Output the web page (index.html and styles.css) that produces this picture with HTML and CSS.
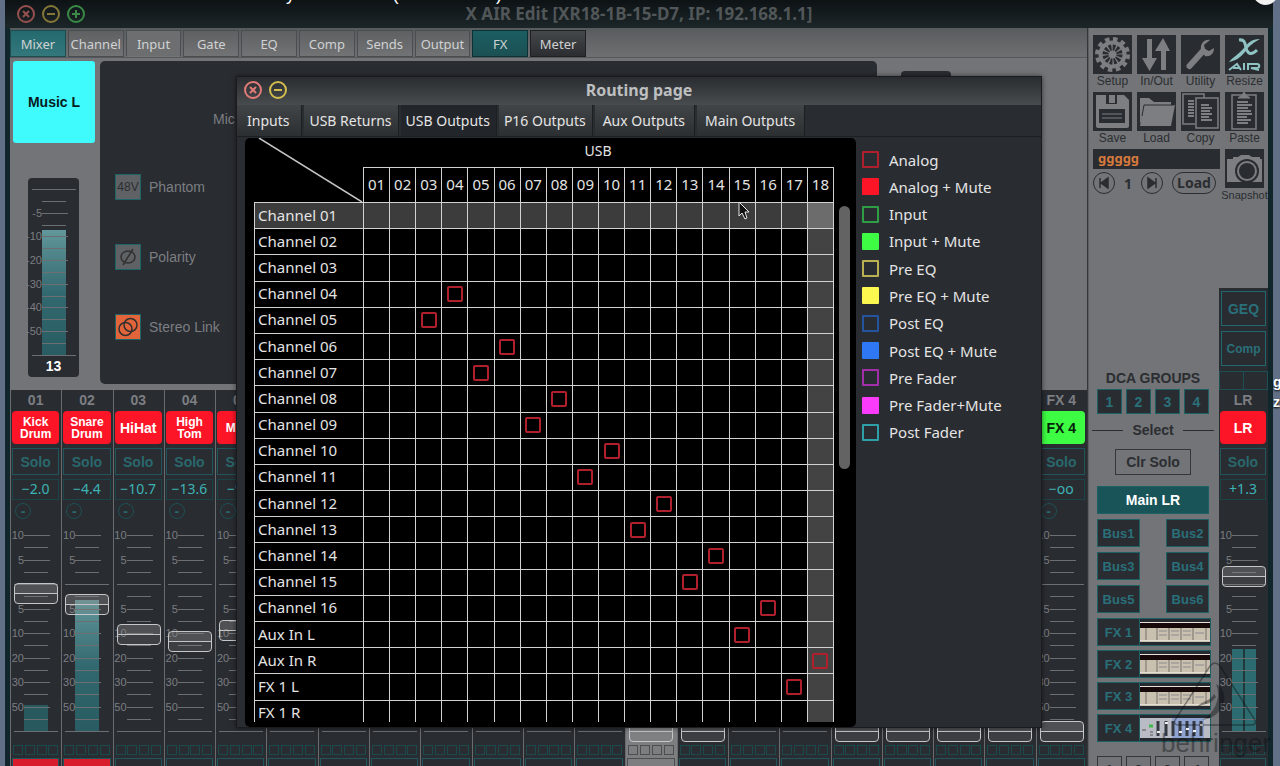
FILE: index.html
```
<!DOCTYPE html>
<html lang="en">
<head>
  <meta charset="utf-8">
  <title>X AIR Edit</title>
  <link rel="stylesheet" href="styles.css">
</head>
<body>
  <div class="caption"><span>y</span><span>(</span><span>)</span></div>
  <div class="knob"></div>
  <div class="desktop-label">g<br>z</div>

  <div class="app">
    <header class="titlebar">
      <div class="dots">
        <button class="dot red" aria-label="Close"><svg viewBox="0 0 18 18"><circle cx="9" cy="9" r="8"/><path d="M6 6l6 6M12 6l-6 6"/></svg></button>
        <button class="dot yellow" aria-label="Minimize"><svg viewBox="0 0 18 18"><circle cx="9" cy="9" r="8"/><path d="M5 9h8"/></svg></button>
        <button class="dot green" aria-label="Zoom"><svg viewBox="0 0 18 18"><circle cx="9" cy="9" r="8"/><path d="M5 9h8M9 5v8"/></svg></button>
      </div>
      <h1>X AIR Edit [XR18-1B-15-D7, IP: 192.168.1.1]</h1>
    </header>

    <div class="body">
      <main class="main">
        <nav class="tabs">
          <div class="tab-list">
            <button class="teal">Mixer</button>
            <button>Channel</button>
            <button class="open">Input</button>
            <button>Gate</button>
            <button>EQ</button>
            <button>Comp</button>
            <button>Sends</button>
            <button>Output</button>
            <button class="fx">FX</button>
            <button class="dark">Meter</button>
          </div>
        </nav>

        <section class="input-page">
          <div class="source">
            <button class="channel-name">Music L</button>
            <div class="input-meter">
              <div class="scale" id="input-scale"></div>
              <b>13</b>
            </div>
          </div>
          <div class="input-panel">
            <span class="mic">Mic</span>
            <div class="option"><button id="phantom">48V</button><label for="phantom">Phantom</label></div>
            <div class="option"><button id="polarity"><svg viewBox="0 0 24 24"><ellipse cx="12" cy="12" rx="7" ry="6"/><path d="M17 4L7 20"/></svg></button><label for="polarity">Polarity</label></div>
            <div class="option on"><button id="link"><svg viewBox="0 0 24 24"><circle cx="9.500" cy="14" r="6.500"/><circle cx="14.500" cy="10" r="6.500"/></svg></button><label for="link">Stereo Link</label></div>
          </div>
          <div class="side-panel"></div>
        </section>

        <section class="strips" id="strips"></section>
      </main>

      <aside class="sidebar">
        <div class="tools">
          <button class="tool"><svg viewBox="0 0 39 39"><circle cx="19.500" cy="19.500" r="15.500" fill="none" stroke="#7c7e82" stroke-width="4" stroke-dasharray="4.500 3.620"/><circle cx="19.500" cy="19.500" r="14" fill="#7c7e82"/><circle cx="19.500" cy="19.500" r="7" fill="none" stroke="#292c30" stroke-width="6" stroke-dasharray="2.400 1.265"/><circle cx="19.500" cy="19.500" r="2.500" fill="#7c7e82"/></svg>Setup</button>
          <button class="tool"><svg viewBox="0 0 39 39"><path fill="#7c7e82" d="M10 4h5v19h5l-7.500 13L5 23h5zM24 35V16h-6l8-13 7 13h-4v19z"/></svg>In/Out</button>
          <button class="tool"><svg viewBox="0 0 39 39"><path d="M8.500 31L22 16" stroke="#7c7e82" stroke-width="6" stroke-linecap="round"/><path fill="#7c7e82" d="M29 5c-6-1-10 4-9 10l4 6c5 1 9-2 9-8l-5 3-4-2-1-4z"/></svg>Utility</button>
          <button class="tool"><svg viewBox="0 0 39 39" fill="none" stroke="#8fc2c2"><path fill="#8fc2c2" stroke="none" d="M35 4c-9 0-12 4-16 9-5 6-11 9-15 14 6-1 11-4 16-10 5-7 8-9 15-13z"/><path d="M14 5c6-1 6 4 7 8s4 9 11 2" stroke-width="3"/><path d="M4 35l8-6 4 6M8 33h7M19 28v7M23 35v-6h9c3 0 3 4 0 4h-6l8 2" stroke-width="2"/></svg>Resize</button>
          <button class="tool"><svg viewBox="0 0 39 39"><path fill="#7c7e82" d="M3 3h28l5 5v26q0 2-2 2H5q-2 0-2-2z"/><path fill="#292c30" d="M13 3h11v9H13zM6 17h26v14H6z"/><path fill="#7c7e82" d="M16 3h6v8h-6z"/><path d="M9 22h20M9 26h20" stroke="#7c7e82"/></svg>Save</button>
          <button class="tool"><svg viewBox="0 0 39 39"><path fill="#7c7e82" d="M3 6h9l5 4h17v4H7L4 31l-1-1z"/><path fill="#7c7e82" d="M7 13h31l-4 21H3z"/><path d="M5 24l2-11h30" stroke="#292c30" fill="none"/></svg>Load</button>
          <button class="tool"><svg viewBox="0 0 39 39" fill="none" stroke="#7c7e82"><path d="M14 32H2V2h21v4M15 6h22v30H15z" stroke-width="1.500"/><path d="M7 9h6M7 12h6M7 15h6M7 18h6M7 21h6M7 24h6M20 13h8M20 16h11M20 19h9M20 22h11M20 25h8M20 28h11" stroke-width="2"/></svg>Copy</button>
          <button class="tool"><svg viewBox="0 0 39 39" fill="none" stroke="#7c7e82"><path d="M7 3h24v34H7z" stroke-width="1.500"/><path fill="#7c7e82" d="M13 6h12l-4-3-2-3-2 3z"/><path d="M12 10h11M12 13h15M12 16h11M12 19h14M12 22h15M12 25h10M12 28h14M12 31h11" stroke-width="2"/></svg>Paste</button>
          <div class="snap">
            <input type="text" value="ggggg" aria-label="Snapshot name">
            <div class="snap-nav">
              <button class="round" aria-label="Previous"><svg viewBox="0 0 20 20"><path d="M6 5v10M14 5v10l-7-5z"/></svg></button>
              <span>1</span>
              <button class="round" aria-label="Next"><svg viewBox="0 0 20 20"><path d="M14 5v10M6 5v10l7-5z"/></svg></button>
              <button class="load">Load</button>
            </div>
          </div>
          <button class="tool snapshot"><svg viewBox="0 0 39 39"><path fill="#7c7e82" d="M2 10h6V8h5l3-2h8l3 2h8v2h2v23H2z"/><circle cx="22" cy="22" r="12" fill="#292c30"/><circle cx="22" cy="22" r="10" fill="#7c7e82"/><circle cx="22" cy="22" r="8" fill="#292c30"/></svg>Snapshot</button>
        </div>

        <div class="lower">
          <div class="groups">
            <h2>DCA GROUPS</h2>
            <div class="dca"><button>1</button><button>2</button><button>3</button><button>4</button></div>
            <div class="select">Select</div>
            <button class="clr">Clr Solo</button>
            <div class="sends">
              <button class="main-lr">Main LR</button>
              <button>Bus1</button><button>Bus2</button>
              <button>Bus3</button><button>Bus4</button>
              <button>Bus5</button><button>Bus6</button>
            </div>
            <div class="fx-list" id="fx-list"></div>
            <div class="dca mutes"><button>1</button><button>2</button><button>3</button><button>4</button></div>
          </div>
          <div class="lr" id="lr">
            <button class="insert">GEQ</button>
            <button class="insert comp">Comp</button>
            <div class="pan"></div>
          </div>
        </div>
      </aside>
    </div>
  </div>

  <div class="dialog" role="dialog" aria-labelledby="routing-title">
    <header class="dialog-title">
      <div class="dots">
        <button class="dot red" aria-label="Close"><svg viewBox="0 0 18 18"><circle cx="9" cy="9" r="8"/><path d="M6 6l6 6M12 6l-6 6"/></svg></button>
        <button class="dot yellow" aria-label="Minimize"><svg viewBox="0 0 18 18"><circle cx="9" cy="9" r="8"/><path d="M5 9h8"/></svg></button>
      </div>
      <h2 id="routing-title">Routing page</h2>
    </header>
    <nav class="dialog-tabs">
      <button>Inputs</button>
      <button>USB Returns</button>
      <button class="active">USB Outputs</button>
      <button>P16 Outputs</button>
      <button class="roomy">Aux Outputs</button>
      <button class="roomy">Main Outputs</button>
    </nav>
    <div class="dialog-body">
      <div class="matrix">
        <div class="matrix-title">USB</div>
        <svg class="diagonal" viewBox="0 0 109 64"><path d="M5 0L108 64"/></svg>
        <div class="matrix-view">
          <table id="routing"></table>
          <div class="scrollbar"></div>
        </div>
        <svg class="cursor" viewBox="0 0 12 19"><path d="M1 1v14l3-3 3 6 2-1-2-6h4z"/></svg>
      </div>
      <ul class="legend">
        <li><i class="red"></i>Analog</li>
        <li><i class="red fill"></i>Analog + Mute</li>
        <li><i class="green"></i>Input</li>
        <li><i class="green fill"></i>Input + Mute</li>
        <li><i class="yellow"></i>Pre EQ</li>
        <li><i class="yellow fill"></i>Pre EQ + Mute</li>
        <li><i class="blue"></i>Post EQ</li>
        <li><i class="blue fill"></i>Post EQ + Mute</li>
        <li><i class="pink"></i>Pre Fader</li>
        <li><i class="pink fill"></i>Pre Fader+Mute</li>
        <li><i class="cyan"></i>Post Fader</li>
      </ul>
    </div>
  </div>

  <div class="watermark">
    <svg viewBox="0 0 90 66"><path d="M40 4q5-6 10 0l35 54q2 5-4 5H9q-6 0-4-5z"/><path d="M46 22c16 8 8 34-14 36 12-6 20-22 14-36zM26 46c6-8 14-6 18-14l2 3c-6 8-12 6-20 11z" fill="currentColor" stroke="none"/></svg>
    <span>behringer</span>
  </div>

  <script src="script.js"></script>
</body>
</html>
```
FILE: styles.css
```
* {
  box-sizing: border-box;
}

body {
  margin: 0;
  height: 100vh;
  overflow: hidden;
  position: relative;
  background: #617087;
  font-family: "Liberation Sans", Arial, sans-serif;
  font-size: 14px;
  color: #7c7e82;
}

button {
  margin: 0;
  padding: 0;
  border: none;
  background: none;
  color: inherit;
  font: inherit;
  cursor: pointer;
}

h1,
h2 {
  margin: 0;
}

/* things lying over the window */
.caption {
  position: absolute;
  z-index: 5;
  top: -16px;
  left: 286px;
  width: 216px;
  display: flex;
  justify-content: space-between;
  color: #fff;
  font-size: 18px;
  line-height: 20px;
}

.knob {
  position: absolute;
  z-index: 5;
  top: -20px;
  right: 2px;
  width: 25px;
  height: 25px;
  border-radius: 50%;
  background: #f2f2f2;
}

.desktop-label {
  position: absolute;
  z-index: 5;
  left: calc(100% - 7px);
  top: 372px;
  color: #fff;
  font-weight: bold;
  line-height: 20px;
  text-shadow: 0 1px 2px #000;
}

.app {
  height: 100%;
  margin: 0 7px 0 5px;
  padding: 0 5px;
  display: flex;
  flex-direction: column;
  background: #10262a;
}

.titlebar {
  flex: none;
  height: 28px;
  margin: 0 -5px;
  position: relative;
  background: linear-gradient(#0d1215, #1c2628);
}

.titlebar h1 {
  font: bold 17px/28px "Noto Sans", sans-serif;
  text-align: center;
  color: #515658;
}

.dots {
  position: absolute;
  left: 12px;
  top: 5px;
  display: flex;
  gap: 7px;
}

.dot {
  width: 18px;
  height: 18px;
}

.dot svg {
  display: block;
  fill: none;
  stroke: currentColor;
  stroke-width: 2;
}

.dot.red { color: #96504e; }
.dot.yellow { color: #857738; }
.dot.green { color: #3a8a46; }

.body {
  flex: 1;
  min-height: 0;
  display: flex;
  background: #727477;
}

.main {
  flex: 1;
  min-width: 0;
  border-right: 1px solid #34373a;
}

/* main tabs */
.tabs {
  height: 30px;
  padding-top: 2px;
  background: linear-gradient(#595c5e, #6e6f70);
  border-bottom: 1px solid #55585a;
}

.tab-list {
  width: 576px;
  height: 27px;
  display: grid;
  grid-template-columns: repeat(10, 1fr);
  gap: 2px;
}

.tab-list button {
  font: 13px/24px "Noto Sans", sans-serif;
  color: #d0d2d3;
  background: linear-gradient(#5e6062, #727374);
  border: 1px solid #4b4e50;
}

.tab-list .teal { background: linear-gradient(#23696e, #34787c); border-color: #1b4c50; }
.tab-list .open { background: #6c6e6f; border-bottom-color: #727477; }
.tab-list .fx { background: linear-gradient(#1b5e62, #1c5054); border-color: #0c3033; }
.tab-list .dark { background: linear-gradient(#45484a, #2b2d30); border-color: #1e2023; }

/* input page */
.input-page {
  display: flex;
  height: 332px;
  padding: 3px 3px 6px;
}

.source {
  width: 82px;
  margin-right: 5px;
}

.channel-name {
  width: 82px;
  height: 82px;
  border-radius: 3px;
  background: #3ffbfd;
  color: #061c1e;
  font-weight: bold;
}

.input-meter {
  width: 51px;
  height: 199px;
  margin: 35px 0 0 15px;
  padding-top: 11px;
  border-radius: 4px;
  background: #292c31;
  text-align: center;
  color: #fff;
}

.input-panel {
  width: 777px;
  height: 323px;
  padding: 50px 15px;
  border-radius: 5px;
  background: #292c31;
}

.mic {
  display: block;
  height: 63px;
  margin-left: 98px;
}

.option {
  display: flex;
  align-items: center;
  gap: 8px;
  margin-bottom: 44px;
}

.option button {
  width: 26px;
  height: 26px;
  border: 1px solid #1d6467;
  background: #5f6264;
  color: #2b2e32;
  font-size: 12px;
}

.option.on button {
  background: #e2643a;
}

.option svg {
  display: block;
  fill: none;
  stroke: #33302f;
  stroke-width: 1.500;
}

.side-panel {
  width: 50px;
  margin: 10px 0 0 24px;
  border-radius: 4px;
  background: #292c31;
}

/* level scales */
.scale {
  position: relative;
  display: flex;
  flex-direction: column;
  justify-content: space-between;
  height: 197px;
  font-size: 11px;
}

.tick {
  position: relative;
  display: flex;
  align-items: center;
  height: 1px;
  color: #7c7e82;
}

.tick span {
  width: 12px;
  line-height: 1px;
  display: flex;
  justify-content: flex-end;
  white-space: nowrap;
}

.tick::after {
  content: "";
  height: 1px;
  width: 24px;
  background: #6c6f72;
}

.tick.labelled::after { width: 26px; }
.tick.wide span { width: 2px; }
.tick.wide::after { width: 44px; }

.level {
  position: absolute;
  left: 12px;
  bottom: 0;
  width: 24px;
  background: linear-gradient(#62989b, #32686f 50%, #285b62 132px);
}

.level.low { background: #28595f; }
.level.pair { background: linear-gradient(90deg, #2c6b70 11px, #22383d 11px, #22383d 13px, #2c6b70 13px); }

.input-meter .scale {
  height: 167px;
  margin-bottom: 2px;
}

.input-meter .scale span { width: 14px; }
.input-meter .wide span { width: 4px; }
.input-meter .level { left: 14px; }

/* channel strips */
.strips {
  display: grid;
  grid-template-columns: repeat(21, 1fr);
}

.strip {
  height: 400px;
  padding: 0 2px 0 1px;
  border-left: 1px solid #696b6d;
  background: #292c31;
  font-weight: bold;
}

.strip.selected { background: #7c7e80; }

.strip > * {
  display: block;
  width: 100%;
}

.number {
  height: 21px;
  line-height: 20px;
  text-align: center;
}

.name {
  height: 33px;
  border-radius: 4px;
  background: #fb1527;
  color: #fff;
  font-size: 12px;
  line-height: 12px;
}

.name.green { background: #3dfc43; color: #06210a; font-size: 14px; }
.name.large { font-size: 14px; }

.solo {
  height: 27px;
  margin-top: 4px;
  border: 1px solid #20565b;
  color: #29686d;
}

.value {
  height: 21px;
  margin-top: 4px;
  border: 1px solid #1b4448;
  background: none;
  color: #3cb3b4;
  font: 14px/16px "Noto Sans", sans-serif;
  text-align: center;
  padding: 0 0 3px;
}

.auto {
  height: 16px;
  width: 16px;
  margin: 3px 0 0 3px;
  border: 1px solid #1d5054;
  border-radius: 50%;
  color: #29686d;
  line-height: 12px;
}

.fader {
  position: relative;
  height: 197px;
  margin: 16px 0 13px;
  font-weight: normal;
}

.fader input {
  position: absolute;
  left: 0;
  top: -10px;
  width: 48px;
  height: 217px;
  margin: 0;
  appearance: none;
  writing-mode: vertical-lr;
  direction: rtl;
  background: none;
}

.fader input::-webkit-slider-thumb {
  appearance: none;
  width: 44px;
  height: 21px;
  border: 1px solid #c4c6c7;
  border-radius: 4px;
  background: linear-gradient(#8886 9px, #c4c5c6 9px, #c4c5c6 10px, #8883 10px);
}

.squares {
  display: flex;
  justify-content: space-between;
  height: 10px;
  padding: 0 1px;
}

.squares i {
  width: 10px;
  border: 1px solid #1b4a4d;
}

.mute {
  height: 28px;
  margin-top: 3px;
  border: 1px solid #20565b;
  color: #29686d;
}

.mute.on { background: #d81c2c; color: #210609; }
.selected .mute, .selected .squares i { border-color: #4c4e50; color: #333; }

/* sidebar */
.sidebar {
  width: 180px;
  padding-left: 4px;
  border-left: 1px solid #5c5f61;
  color: #2b2d31;
}

.tools {
  display: grid;
  grid-template-columns: repeat(4, 39px);
  gap: 0 5px;
  height: 260px;
  padding-top: 7px;
  align-content: start;
}

.tool {
  height: 57px;
  display: flex;
  flex-direction: column;
  align-items: center;
  font-size: 12px;
  line-height: 15px;
}

.tool svg {
  flex: none;
  width: 39px;
  height: 39px;
  background: #292c30;
}

.snapshot {
  font-size: 11px;
}

.snap {
  grid-column: span 3;
}

.snap input {
  display: block;
  width: 100%;
  height: 20px;
  padding: 0 5px 3px;
  border: none;
  background: #292c30;
  color: #d67a3d;
  font: bold 13px/16px "Noto Sans", sans-serif;
}

.snap-nav {
  display: flex;
  align-items: center;
  justify-content: space-between;
  height: 22px;
  margin: 3px 4px 0 0;
  font: bold 14px "Noto Sans", sans-serif;
}

.round,
.load {
  width: 22px;
  height: 22px;
  border: 1px solid #2b2d31;
  border-radius: 11px;
}

.load {
  width: 44px;
  line-height: 18px;
}

.round svg {
  display: block;
  fill: currentColor;
  stroke: currentColor;
  stroke-width: 1.500;
}

.lower {
  display: flex;
  font-weight: bold;
}

.groups {
  width: 120px;
  margin-right: 6px;
  padding: 82px 4px 0;
}

.groups h2 {
  font-size: 14px;
  line-height: 16px;
  text-align: center;
  white-space: nowrap;
}

.groups button {
  border: 1px solid #1e6165;
  background: #292c31;
  color: #29707a;
}

.dca {
  display: flex;
  justify-content: space-between;
  margin-top: 3px;
}

.dca button {
  width: 25px;
  height: 25px;
}

.select {
  display: flex;
  align-items: center;
  gap: 9px;
  margin: 8px -5px 0;
  line-height: 16px;
}

.select::before,
.select::after {
  content: "";
  flex: 1;
  height: 1px;
  background: #2b2d31;
}

.groups .clr {
  display: block;
  width: 76px;
  height: 26px;
  margin: 11px auto;
  border-color: #34373a;
  background: none;
  color: #2b2d31;
}

.sends {
  display: grid;
  grid-template-columns: 43px 43px;
  grid-auto-rows: 28px;
  justify-content: space-between;
  row-gap: 5px;
  font-size: 13px;
}

.sends .main-lr {
  grid-column: span 2;
  background: #185458;
  color: #fff;
  font-size: 14px;
}

.fx-list {
  display: grid;
  gap: 4px;
  margin-top: 5px;
  font-size: 13px;
}

.fx-row {
  display: flex;
  height: 28px;
  background: #262a30;
  border: 1px solid #1e6165;
}

.fx-row button {
  width: 42px;
  border-width: 0 1px 0 0;
}

.fx-row svg {
  flex: 1;
  height: 20px;
  margin-top: 3px;
}

.mutes { margin-top: 14px; }
.groups .mutes button { background: none; color: #2b2d31; border-color: #34373a; height: 27px; }

.lr {
  width: 49px;
  background: #292c31;
  padding-top: 3px;
}

.insert {
  display: block;
  width: 45px;
  height: 35px;
  margin: 0 auto 5px;
  border: 1px solid #20686d;
  color: #29707a;
  font-weight: bold;
}

.comp { font-size: 12px; }

.pan {
  height: 19px;
  border: 1px solid #1c5054;
  background: linear-gradient(90deg, #0000 23px, #1c5054 23px, #1c5054 24px, #0000 24px);
}

.lr .auto { visibility: hidden; }
.lr .strip { border-left: none; color: #7c7e82; }

/* routing dialog */
.dialog {
  position: absolute;
  left: 236px;
  top: 76px;
  width: 806px;
  height: 652px;
  border: 1px solid #191b1e;
  background: #292c31;
  box-shadow: 0 0 5px #0008;
  color: #e4e4e4;
  font-family: "Noto Sans", sans-serif;
}

.dialog-title {
  height: 28px;
  position: relative;
  background: linear-gradient(#292c30, #494c4e);
}

.dialog-title h2 {
  font: bold 16px/26px "Noto Sans", sans-serif;
  text-align: center;
  color: #bdbfc0;
}

.dialog-title .dots { left: 7px; top: 4px; }
.dialog-title .red { color: #e27b78; }
.dialog-title .yellow { color: #d2bd4e; }

.dialog-tabs {
  display: flex;
  gap: 2px;
  height: 32px;
  border-bottom: 1px solid #1c1e21;
}

.dialog-tabs button {
  padding: 0 6px 0 5px;
  border-right: 1px solid #1c1e21;
  background: linear-gradient(#424548, #2c2f32);
}

.dialog-tabs button:first-child { padding: 0 12px 0 10px; }
.dialog-tabs .active { background: #22252a; }
.dialog-tabs .roomy { padding: 0 9px 0 8px; }

.dialog-body {
  display: flex;
}

.matrix {
  position: relative;
  width: 611px;
  height: 589px;
  margin: 1px 0 0 8px;
  padding: 0 6px 0 9px;
  border-radius: 5px;
  background: #000;
}

.matrix-title {
  height: 29px;
  padding-left: 92px;
  line-height: 25px;
  text-align: center;
}

.diagonal {
  position: absolute;
  left: 9px;
  top: 0;
  width: 109px;
  height: 64px;
  stroke: #c4c4c4;
  stroke-width: 1.500;
}

.matrix-view {
  display: flex;
  justify-content: space-between;
  height: 555px;
  overflow: hidden;
}

table {
  width: 580px;
  height: 560px;
  table-layout: fixed;
  border-collapse: collapse;
  font-size: 15px;
}

th,
td {
  padding: 0;
  border: 1px solid #d2d2d2;
  font-weight: normal;
  line-height: 20px;
}

th { padding-bottom: 2px; }
thead th { height: 35px; }
thead th:first-child { width: 109px; border-top: none; border-left: none; }
tbody th { text-align: left; padding-left: 3px; }
tbody tr:first-child > * { background: #3c3c3c; }
td:last-child { background: #434343; }
tbody tr:first-child td:last-child { background: #6c6c6c; }

td button {
  display: block;
  width: 16px;
  height: 16px;
  margin: 0 auto;
  border: 2px solid #b01f2c;
  border-radius: 2px;
}

.scrollbar {
  width: 11px;
  height: 263px;
  margin-top: 39px;
  border-radius: 6px;
  background: #636363;
}

.cursor {
  position: absolute;
  left: 493px;
  top: 63px;
  width: 12px;
  height: 19px;
  fill: #111;
  stroke: #e8e8e8;
}

.legend {
  display: grid;
  grid-auto-rows: 1fr;
  height: 300px;
  margin: 9px 0 0 6px;
  padding: 0;
  list-style: none;
  font-size: 15px;
}

.legend li {
  display: flex;
  align-items: center;
  gap: 10px;
}

.legend i {
  width: 17px;
  height: 17px;
  border: 2px solid currentColor;
  border-radius: 1px;
}

.legend .fill { background: currentColor; }
.legend .red { color: #b01f2c; }
.legend .red.fill { color: #fb1527; }
.legend .green { color: #2f9d43; }
.legend .green.fill { color: #3dfc43; }
.legend .yellow { color: #b9b052; }
.legend .yellow.fill { color: #fdf84f; }
.legend .blue { color: #2553a0; }
.legend .blue.fill { color: #2e78f5; }
.legend .pink { color: #a22fa8; }
.legend .pink.fill { color: #fb3bfb; }
.legend .cyan { color: #2fa0a8; }

.watermark {
  position: absolute;
  z-index: 4;
  right: 6px;
  top: 662px;
  width: 116px;
  color: #0b0d0f;
  opacity: 0.4;
  text-align: center;
  pointer-events: none;
}

.watermark svg {
  display: block;
  width: 90px;
  height: 66px;
  margin-left: 12px;
  fill: none;
  stroke: currentColor;
  stroke-width: 1.500;
}

.watermark span {
  font: 26px/30px "Liberation Sans", sans-serif;
}
```
FILE: script.js
```
const faderMarks = ["10", "", "5", "", "wide", "", "5", "", "10", "", "20", "", "30", "", "50", "", "wide"];
const inputMarks = ["wide", "", "-5", "", "-10", "", "-20", "", "-30", "", "-40", "", "-50", "", "wide"];

function ticks(marks) {
  return marks.map(m => {
    const text = m === "wide" ? "" : m;
    const cls = m === "wide" ? " wide" : m ? " labelled" : "";
    return `<div class="tick${cls}"><span>${text}</span></div>`;
  }).join("");
}

// fader: 0 is the bottom of the travel, 196 the top
const strips = [
  { name: "Kick Drum", value: "−2.0", fader: 138, level: 27, low: true, mute: true },
  { name: "Snare Drum", value: "−4.4", fader: 127, level: 132, mute: true },
  { name: "HiHat", value: "−10.7", fader: 97, large: true },
  { name: "High Tom", value: "−13.6", fader: 90 },
  { name: "Mic&nbsp;5", value: "−9.6", fader: 101 }
];
for (let i = 5; i < 21; i++) {
  strips.push({ name: "", value: "", fader: 100 });
}
[12, 13, 16, 17, 18, 19, 20].forEach(i => strips[i].fader = 0);
strips[12].selected = true;
Object.assign(strips[20], { number: "FX 4", name: "FX 4", value: "−oo", green: true });

function strip(s, i) {
  const number = s.number || String(i + 1).padStart(2, "0");
  const cls = (s.green ? " green" : "") + (s.large ? " large" : "");
  const level = s.level ? `<div class="level${s.low ? " low" : ""}${s.pair ? " pair" : ""}" style="height: ${s.level}px"></div>` : "";
  return `
    <div class="strip${s.selected ? " selected" : ""}">
      <div class="number">${number}</div>
      <button class="name${cls}">${s.name}</button>
      <button class="solo">Solo</button>
      <input class="value" type="text" value="${s.value}" aria-label="${number} level">
      <button class="auto">-</button>
      <div class="fader">
        <div class="scale">${level}${ticks(faderMarks)}</div>
        <input type="range" min="0" max="196" value="${s.fader}" aria-label="${number} fader">
      </div>
      <div class="squares"><i></i><i></i><i></i><i></i></div>
      <button class="mute${s.mute ? " on" : ""}">Mute</button>
    </div>`;
}

document.getElementById("strips").innerHTML = strips.map(strip).join("");
document.getElementById("lr").insertAdjacentHTML("beforeend",
  strip({ number: "LR", name: "LR", value: "+1.3", fader: 155, level: 83, pair: true, large: true }, 0));
document.getElementById("input-scale").innerHTML =
  `<div class="level" style="height: 126px"></div>` + ticks(inputMarks);

// effect rack thumbnails
const rack = `
  <rect width="70" height="20" fill="#c9c0b0"/>
  <rect y="1" width="70" height="5" fill="#17090a"/>
  <path d="M0 .5h70M0 18.500h70" stroke="#e4dfd6"/>
  <path d="M6 6v12M17 6v12M29 6v12M41 6v12M53 6v12M66 6v12" stroke="#77706a"/>
  <path d="M19 9h8M31 9h8M43 9h8M19 13h8M31 13h8M43 13h8M55 11h9" stroke="#aaa69f" stroke-width="2"/>`;
const eq = `
  <rect width="70" height="20" fill="#b9bcc4"/>
  <path d="M32 0h32v20H32z" fill="#8ea3cf"/>
  <path d="M18 3v15M26 3v15M33 3v15M40 3v15M47 3v15M54 3v15M61 3v15" stroke="#363a44" stroke-width="3"/>
  <path d="M17 14h3M25 5h3M39 14h3M46 11h3M53 13h3M60 7h3" stroke="#eee" stroke-width="2"/>
  <path d="M9 8h4" stroke="#43b94a" stroke-width="3"/><path d="M2 12h4M10 14h3M10 17h3" stroke="#555"/>`;
document.getElementById("fx-list").innerHTML = [1, 2, 3, 4].map(n => `
  <div class="fx-row"><button>FX ${n}</button><svg viewBox="0 0 70 20" preserveAspectRatio="none">${n === 4 ? eq : rack}</svg></div>`).join("");

// routing matrix: source row -> USB output
const routes = { 4: 4, 5: 3, 6: 6, 7: 5, 8: 8, 9: 7, 10: 10, 11: 9, 12: 12, 13: 11, 14: 14, 15: 13, 16: 16, 17: 15, 18: 18, 19: 17 };
const sources = [];
for (let i = 1; i <= 16; i++) sources.push("Channel " + String(i).padStart(2, "0"));
sources.push("Aux In L", "Aux In R", "FX 1 L", "FX 1 R");

let html = "<thead><tr><th></th>";
for (let c = 1; c <= 18; c++) html += `<th>${String(c).padStart(2, "0")}</th>`;
html += "</tr></thead><tbody>";
sources.forEach((name, r) => {
  html += `<tr><th>${name}</th>`;
  for (let c = 1; c <= 18; c++) {
    html += `<td>${routes[r + 1] === c ? `<button aria-label="${name} to USB ${c}"></button>` : ""}</td>`;
  }
  html += "</tr>";
});
document.getElementById("routing").innerHTML = html + "</tbody>";
```
